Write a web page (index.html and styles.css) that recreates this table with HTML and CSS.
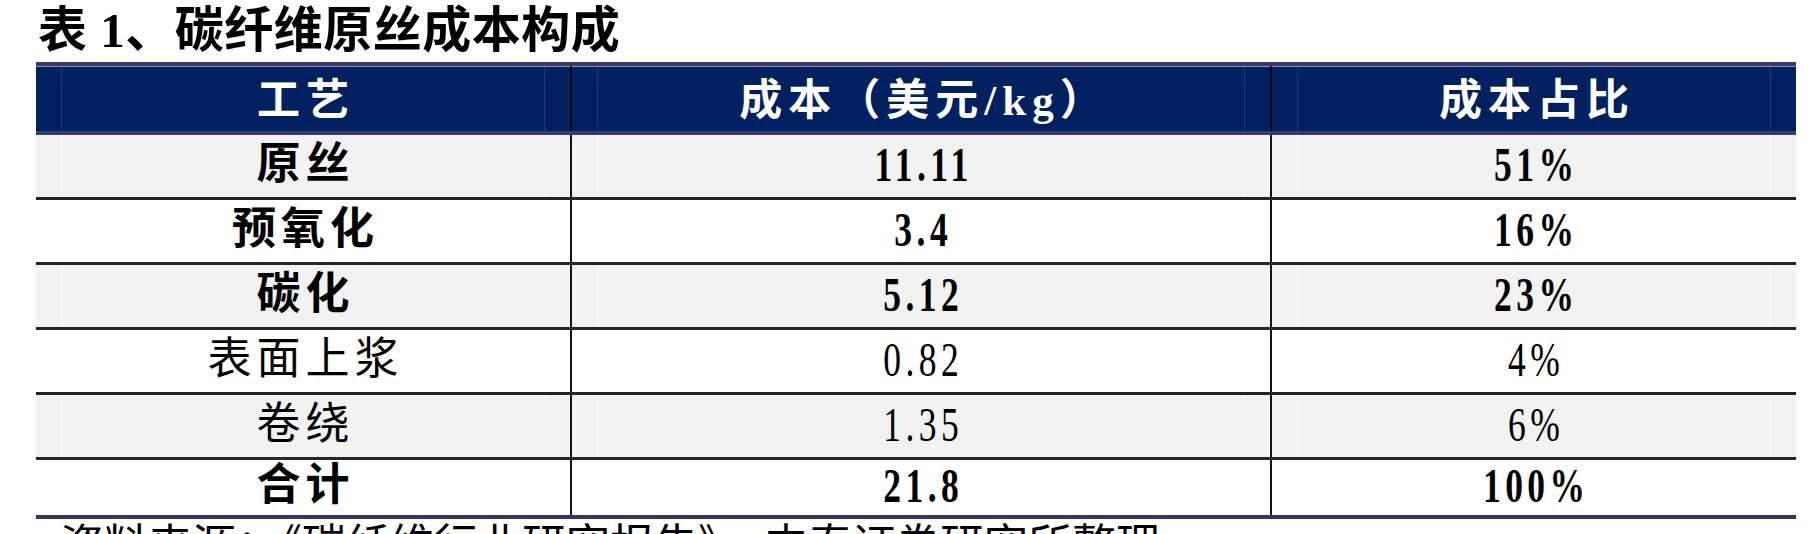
FILE: index.html
```html
<!DOCTYPE html>
<html lang="zh-CN">
<head>
<meta charset="utf-8">
<title>表1、碳纤维原丝成本构成</title>
<link rel="stylesheet" href="styles.css">
</head>
<body>
<div class="page">
  <h1 class="title">表 1、碳纤维原丝成本构成</h1>
  <div class="table">
    <div class="row head">
      <div class="cell"><span class="t">工艺</span></div>
      <div class="cell"><span class="t">成本（美元/kg）</span></div>
      <div class="cell"><span class="t">成本占比</span></div>
    </div>
    <div class="row shade bold first">
      <div class="cell"><span class="t">原丝</span></div>
      <div class="cell"><span class="num">11.11</span></div>
      <div class="cell"><span class="num">51%</span></div>
    </div>
    <div class="row bold">
      <div class="cell"><span class="t">预氧化</span></div>
      <div class="cell"><span class="num">3.4</span></div>
      <div class="cell"><span class="num">16%</span></div>
    </div>
    <div class="row shade bold">
      <div class="cell"><span class="t">碳化</span></div>
      <div class="cell"><span class="num">5.12</span></div>
      <div class="cell"><span class="num">23%</span></div>
    </div>
    <div class="row">
      <div class="cell"><span class="t">表面上浆</span></div>
      <div class="cell"><span class="num">0.82</span></div>
      <div class="cell"><span class="num">4%</span></div>
    </div>
    <div class="row shade">
      <div class="cell"><span class="t">卷绕</span></div>
      <div class="cell"><span class="num">1.35</span></div>
      <div class="cell"><span class="num">6%</span></div>
    </div>
    <div class="row bold last">
      <div class="cell"><span class="t">合计</span></div>
      <div class="cell"><span class="num">21.8</span></div>
      <div class="cell"><span class="num">100%</span></div>
    </div>
  </div>
  <p class="note">资料来源：《碳纤维行业研究报告》，中泰证券研究所整理</p>
</div>
</body>
</html>
```

FILE: styles.css
```css
html, body {
  margin: 0;
  padding: 0;
  background: #ffffff;
}

body {
  font-family: "Liberation Serif", "Noto Sans CJK SC", serif;
  color: #000000;
  overflow: hidden;
  height: 534px;
}

.page {
  display: flex;
  flex-direction: column;
}

.title {
  margin: 0;
  padding-left: 38px;
  height: 62px;
  line-height: 62px;
  font-size: 49px;
  font-weight: 700;
  letter-spacing: 0.5px;
  font-family: "Liberation Serif", "Noto Sans CJK SC", serif;
  white-space: nowrap;
}

.table {
  margin-left: 36px;
  width: 1760px;
  display: flex;
  flex-direction: column;
  border-bottom: 4px solid #353567;
}

.row {
  display: grid;
  grid-template-columns: 534px 700px 526px;
  height: 62px;
  box-sizing: content-box;
}

.row + .row:not(.first) {
  border-top: 3px solid #262626;
}

.row.last {
  height: 55px;
}

.cell {
  box-sizing: border-box;
  display: flex;
  align-items: center;
  justify-content: center;
  line-height: 1;
  padding-bottom: 2px;
  font-size: 44px;
  font-weight: 400;
  white-space: nowrap;
  --faint: transparent;
  background-image:
    linear-gradient(90deg, transparent 25px, var(--faint) 25px, var(--faint) 26px, transparent 26px),
    linear-gradient(270deg, transparent 25px, var(--faint) 25px, var(--faint) 26px, transparent 26px);
}

.row.last .cell {
  padding-bottom: 4px;
}

.cell + .cell {
  border-left: 2px solid #141414;
}

.t {
  letter-spacing: 5px;
  padding-left: 5px;
}

.num {
  display: inline-block;
  font-size: 48px;
  letter-spacing: 6px;
  padding-left: 6px;
  transform: scaleX(0.74);
}

.bold .cell {
  font-weight: 700;
}

.shade {
  background: #f2f2f2;
}

.shade .cell {
  --faint: #f8f8f8;
}

.head {
  height: 65px;
  background: #002060;
  border-top: 4px solid #38386a;
  border-bottom: 4px solid #3a3a6c;
}

.head .cell {
  color: #ffffff;
  font-weight: 700;
  font-size: 43px;
  padding-top: 4px;
  padding-bottom: 0;
  box-shadow: inset 0 1px 0 #8f8fb3;
  --faint: #1c3a78;
}

.head .t {
  letter-spacing: 6px;
  padding-left: 6px;
}

.head .cell + .cell {
  border-left: 2px solid #050505;
}

.note {
  margin: 4px 0 0 60px;
  font-size: 44px;
  line-height: 48px;
  white-space: nowrap;
  font-family: "Liberation Serif", "Noto Sans CJK SC", serif;
}
```
